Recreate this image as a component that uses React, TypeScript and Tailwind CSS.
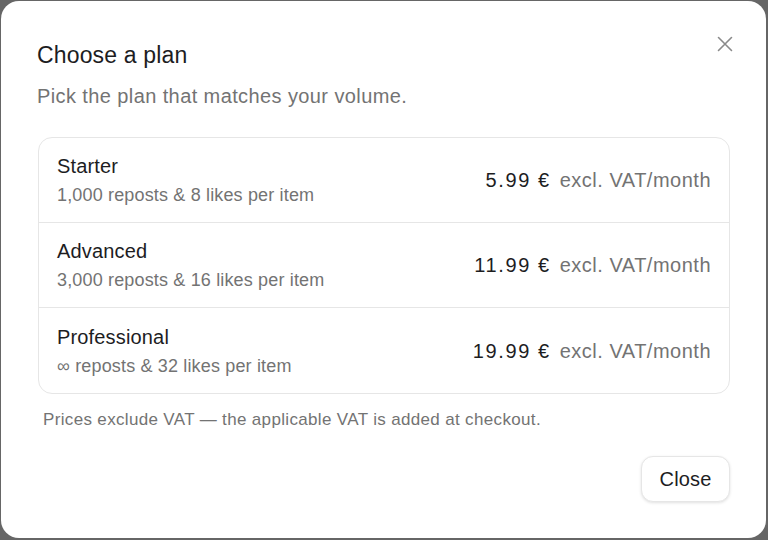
import React from "react";

const plans = [
  { name: "Starter", desc: "1,000 reposts & 8 likes per item", price: "5.99 €" },
  { name: "Advanced", desc: "3,000 reposts & 16 likes per item", price: "11.99 €" },
  { name: "Professional", desc: "∞ reposts & 32 likes per item", price: "19.99 €" },
];

export default function App() {
  return (
    <div
      className="w-[768px] h-[540px] bg-[#666666] p-px overflow-hidden tracking-[0.01em]"
      style={{ fontFamily: "'Liberation Sans', Arial, sans-serif" }}
    >
      <div className="relative h-[537px] w-[765px] rounded-[18px] bg-white pl-[36px] pr-[36px] pt-[40px]">
        <button className="absolute top-[35px] right-[33px] text-[#8a8a8a]" aria-label="Close">
          <svg width="16" height="16" viewBox="0 0 16 16" fill="none" stroke="currentColor" strokeWidth="1.6" strokeLinecap="round">
            <path d="M1.5 1.5 L14.5 14.5 M14.5 1.5 L1.5 14.5" />
          </svg>
        </button>
        <h2 className="text-[23px] leading-[28px] text-[#1d1d1f] font-normal">Choose a plan</h2>
        <p className="mt-[14px] text-[20px] leading-[26px] tracking-[0.02em] text-[#737373]">
          Pick the plan that matches your volume.
        </p>
        <div className="ml-px mt-[28px] rounded-[14px] border border-[#e6e6e6] overflow-hidden">
          {plans.map((p, i) => (
            <div
              key={p.name}
              className={`flex h-[85px] items-center justify-between pl-[18px] pr-[18px] ${i < plans.length - 1 ? "border-b border-[#e6e6e6]" : ""}`}
            >
              <div className="flex flex-col">
                <span className="text-[20px] leading-[24px] text-[#1d1d1f]">{p.name}</span>
                <span className="mt-[6px] text-[18px] leading-[22px] text-[#737373]">{p.desc}</span>
              </div>
              <div className="flex items-baseline gap-[10px] text-[20px] leading-[26px]">
                <span className="text-[#1d1d1f] tracking-[0.08em] mr-[-1px]">{p.price}</span>
                <span className="text-[#737373] tracking-[0.025em]">excl. VAT/month</span>
              </div>
            </div>
          ))}
        </div>
        <p className="mt-[15px] pl-[6px] text-[17px] leading-[22px] tracking-[0.02em] text-[#737373]">
          Prices exclude VAT — the applicable VAT is added at checkout.
        </p>
        <div className="mt-[25px] flex justify-end">
          <button className="h-[46px] w-[89px] rounded-[12px] border border-[#e6e6e6] bg-white text-[20px] text-[#1d1d1f] shadow-[0_1px_3px_rgba(0,0,0,0.12)]">
            Close
          </button>
        </div>
      </div>
    </div>
  );
}
